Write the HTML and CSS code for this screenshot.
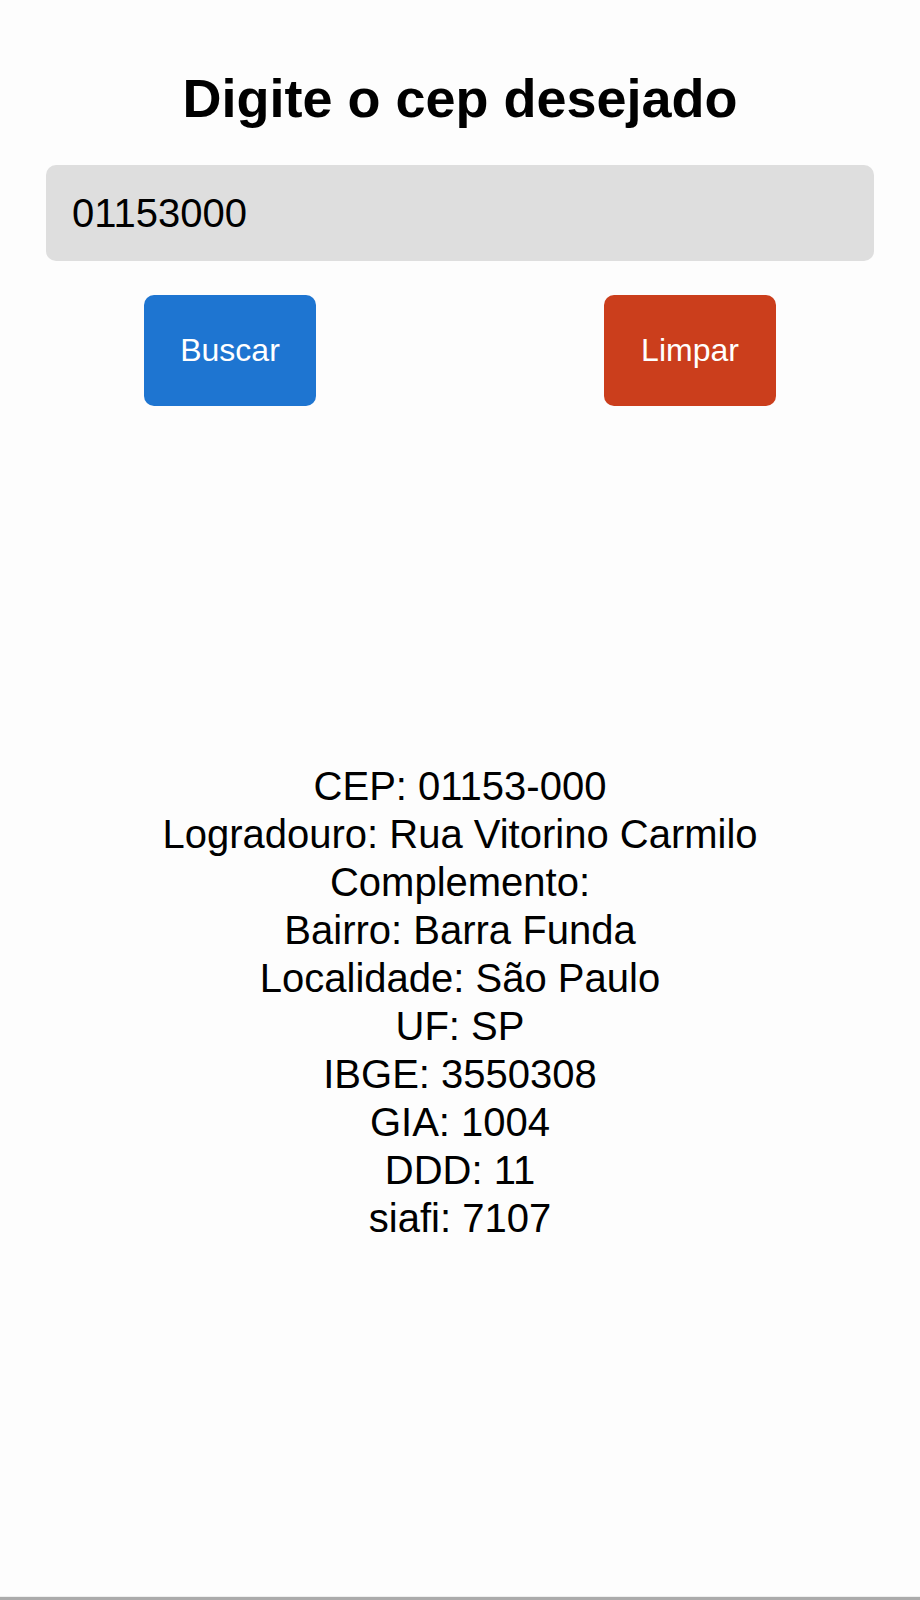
FILE: index.html
```html
<!DOCTYPE html>
<html lang="pt-BR">
<head>
<meta charset="utf-8">
<title>Busca CEP</title>
<link rel="stylesheet" href="styles.css">
</head>
<body>
<main class="page">
  <h1 class="title">Digite o cep desejado</h1>
  <div class="field">01153000</div>
  <div class="actions">
    <button class="btn btn-search">Buscar</button>
    <button class="btn btn-clear">Limpar</button>
  </div>
  <div class="result">
    <p>CEP: 01153-000</p>
    <p>Logradouro: Rua Vitorino Carmilo</p>
    <p>Complemento: </p>
    <p>Bairro: Barra Funda</p>
    <p>Localidade: São Paulo</p>
    <p>UF: SP</p>
    <p>IBGE: 3550308</p>
    <p>GIA: 1004</p>
    <p>DDD: 11</p>
    <p>siafi: 7107</p>
  </div>
</main>
<div class="bottom-bar"></div>
</body>
</html>
```

FILE: styles.css
```css
* { box-sizing: border-box; }
html, body { margin: 0; padding: 0; }
body {
  background: #fdfdfd;
  color: #000;
  font-family: "Liberation Sans", Arial, sans-serif;
  min-height: 1600px;
  display: flex;
  flex-direction: column;
}
.page {
  flex: 1;
  display: flex;
  flex-direction: column;
  padding-top: 68px;
}
.title {
  margin: 0;
  font-size: 54px;
  line-height: 60px;
  font-weight: 700;
  text-align: center;
}
.field {
  margin: 37px 46px 0;
  height: 96px;
  background: #dedede;
  border-radius: 10px;
  padding-left: 26px;
  display: flex;
  align-items: center;
  font-size: 40px;
}
.actions {
  margin-top: 34px;
  display: flex;
  justify-content: space-around;
}
.btn {
  width: 172px;
  height: 111px;
  border: none;
  border-radius: 10px;
  color: #fff;
  font-family: "Liberation Sans", Arial, sans-serif;
  font-size: 32px;
  padding: 0;
}
.btn-search { background: #1e75d1; }
.btn-clear { background: #cb3e1c; }
.result {
  margin-top: 356px;
  text-align: center;
  font-size: 40px;
  line-height: 48px;
}
.result p { margin: 0; }
.bottom-bar {
  height: 4px;
  border-top: 1px solid #efefef;
  background: #ababab;
}
```
